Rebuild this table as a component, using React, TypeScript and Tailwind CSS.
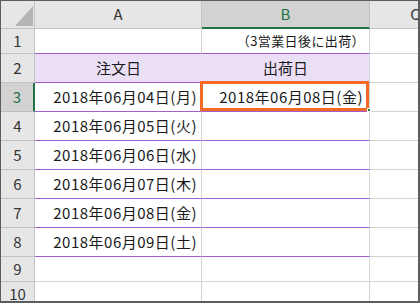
const font = { fontFamily: '"Noto Sans CJK JP", "Noto Sans", sans-serif' };

const dates = [
  "2018年06月04日(月)",
  "2018年06月05日(火)",
  "2018年06月06日(水)",
  "2018年06月07日(木)",
  "2018年06月08日(金)",
  "2018年06月09日(土)",
];

const RowHead = ({ n, h, active }: { n: number; h: string; active?: boolean }) => (
  <div
    className={`${h} flex items-center justify-center border-b border-r text-[15px] ${
      active
        ? "bg-[#d2d2d2] text-[#217346] border-r-2 border-r-[#217346] border-b-[#bdbdbd]"
        : "bg-[#e6e6e6] text-[#333] border-[#c4c4c4]"
    }`}
  >
    {n}
  </div>
);

export default function App() {
  return (
    <div className="w-[420px] h-[303px] bg-white" style={font}>
      <div className="w-[420px] h-[303px] overflow-hidden border border-r-2 border-b-2 border-[#5c5c5c]">
        <div className="grid grid-cols-[34px_167px_168px_90px] text-[#1a1a1a]">
          {/* column headers */}
          <div className="h-[28px] bg-[#e6e6e6] border-r border-b border-[#c4c4c4] relative">
            <svg className="absolute left-[14px] top-[5px]" width="18" height="20" viewBox="0 0 18 20">
              <polygon points="18,0 18,20 0,20" fill="#b5b5b5" />
            </svg>
          </div>
          <div className="h-[28px] bg-[#e6e6e6] border-r border-b border-[#c4c4c4] flex items-center justify-center text-[15px] text-[#333]">
            A
          </div>
          <div className="h-[28px] bg-[#d2d2d2] border-r border-r-[#c4c4c4] border-b-2 border-b-[#217346] flex items-center justify-center text-[15px] text-[#217346]">
            B
          </div>
          <div className="h-[28px] bg-[#e6e6e6] border-b border-[#c4c4c4] flex items-center justify-center text-[15px] text-[#333]">
            C
          </div>

          {/* row 1 */}
          <RowHead n={1} h="h-[25px]" />
          <div className="h-[25px] border-r border-r-[#d4d4d4] border-b border-b-[#a25fd0]" />
          <div className="h-[25px] border-r border-r-[#d4d4d4] border-b border-b-[#a25fd0] flex items-center justify-end pr-[4px] text-[13px] tracking-[0.4px]">
            （3営業日後に出荷）
          </div>
          <div className="h-[25px] border-b border-[#d4d4d4]" />

          {/* row 2 */}
          <RowHead n={2} h="h-[29px]" />
          <div className="h-[29px] bg-[#ebdff5] border-b border-b-[#a25fd0] flex items-center justify-center text-[15px]">
            注文日
          </div>
          <div className="h-[29px] bg-[#ebdff5] border-r border-r-[#d4d4d4] border-b border-b-[#a25fd0] flex items-center justify-center text-[15px]">
            出荷日
          </div>
          <div className="h-[29px] border-b border-[#d4d4d4]" />

          {/* rows 3-8 */}
          {dates.map((d, i) => (
            <div key={d} className="contents">
              <RowHead n={i + 3} h="h-[29px]" active={i === 0} />
              <div className="h-[29px] border-r border-r-[#d4d4d4] border-b border-b-[#a25fd0] flex items-center justify-end pr-[4px] text-[15px] tracking-[0.5px]">
                {d}
              </div>
              <div className="h-[29px] border-r border-r-[#d4d4d4] border-b border-b-[#a25fd0] flex items-center justify-end pr-[6px] text-[15px] tracking-[0.5px] relative">
                {i === 0 && (
                  <>
                    2018年06月08日(金)
                    <div className="absolute -left-[2px] -top-[2px] right-0 bottom-0 border-[3px] border-[#f26a24]" />
                    <div className="absolute -right-[2px] -bottom-[1px] w-[4px] h-[4px] bg-[#217346] border border-white" />
                  </>
                )}
              </div>
              <div className="h-[29px] border-b border-[#d4d4d4]" />
            </div>
          ))}

          {/* rows 9-10 */}
          {[9, 10].map((n) => (
            <div key={n} className="contents">
              <RowHead n={n} h="h-[25px]" />
              <div className="h-[25px] border-r border-b border-[#d4d4d4]" />
              <div className="h-[25px] border-r border-b border-[#d4d4d4]" />
              <div className="h-[25px] border-b border-[#d4d4d4]" />
            </div>
          ))}
        </div>
      </div>
    </div>
  );
}
